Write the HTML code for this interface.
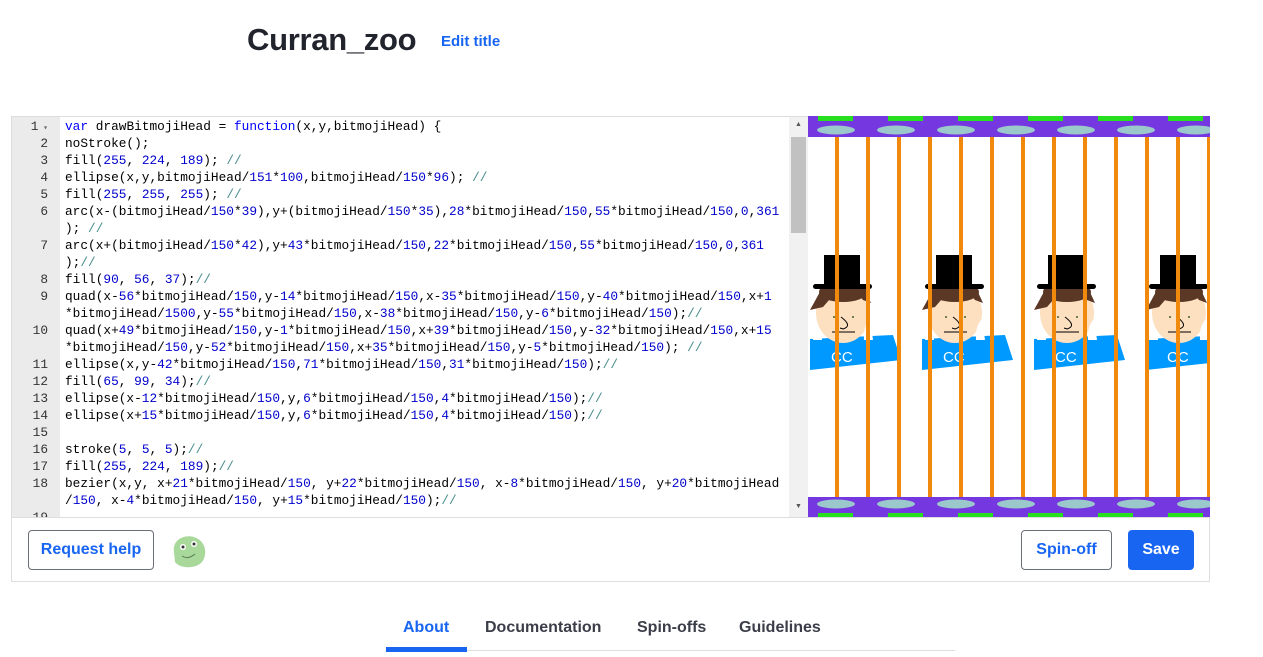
<!DOCTYPE html>
<html><head><meta charset="utf-8"><style>
body{margin:0;width:1263px;height:657px;background:#fff;font-family:"Liberation Sans",sans-serif;position:relative;overflow:hidden}
.abs{position:absolute}
h1{position:absolute;left:247px;top:22px;margin:0;font-size:31px;font-weight:bold;color:#21242c;letter-spacing:-0.3px}
.edit{left:441px;top:33px;color:#1865f2;font-size:15px;font-weight:bold}
.wrap{left:11px;top:116px;width:1199px;height:466px;border:1px solid #ddd;box-sizing:border-box}
.gut{left:12px;top:117px;width:48px;height:400px;background:#ebebeb}
.code{left:12px;top:117px;width:777px;height:400px;overflow:hidden;font-family:"Liberation Mono",monospace;font-size:12.8px;line-height:17px}
.ln{position:absolute;left:0;width:36px;text-align:right;color:#333}
.tx{position:absolute;left:53px;color:#000;white-space:pre}
.n{color:#0000cd}.k{color:#00f}.c{color:#4a8d8d}
.sb{left:789px;top:117px;width:19px;height:400px;background:#f1f1f1}
.btn{border:1px solid #6b6f78;border-radius:4px;box-sizing:border-box;font-size:16px;font-weight:bold;color:#1865f2;text-align:center}
</style></head><body>
<h1>Curran_zoo</h1>
<div class="abs edit">Edit title</div>
<div class="abs wrap"></div>
<div class="abs gut"></div>
<div class="abs code">
<div class="ln" style="top:1px">1<span style="font-size:8px;color:#666"> ▾</span></div>
<div class="ln" style="top:18px">2</div><div class="ln" style="top:35px">3</div><div class="ln" style="top:52px">4</div><div class="ln" style="top:69px">5</div><div class="ln" style="top:86px">6</div><div class="ln" style="top:120px">7</div><div class="ln" style="top:154px">8</div><div class="ln" style="top:171px">9</div><div class="ln" style="top:205px">10</div><div class="ln" style="top:239px">11</div><div class="ln" style="top:256px">12</div><div class="ln" style="top:273px">13</div><div class="ln" style="top:290px">14</div><div class="ln" style="top:307px">15</div><div class="ln" style="top:324px">16</div><div class="ln" style="top:341px">17</div><div class="ln" style="top:358px">18</div><div class="ln" style="top:392px">19</div>
<div class="tx" style="top:1px"><span class="k">var</span> drawBitmojiHead = <span class="k">function</span>(x,y,bitmojiHead) {
noStroke();
fill(<span class="n">255</span>, <span class="n">224</span>, <span class="n">189</span>); <span class="c">//</span>
ellipse(x,y,bitmojiHead/<span class="n">151</span>*<span class="n">100</span>,bitmojiHead/<span class="n">150</span>*<span class="n">96</span>); <span class="c">//</span>
fill(<span class="n">255</span>, <span class="n">255</span>, <span class="n">255</span>); <span class="c">//</span>
arc(x-(bitmojiHead/<span class="n">150</span>*<span class="n">39</span>),y+(bitmojiHead/<span class="n">150</span>*<span class="n">35</span>),<span class="n">28</span>*bitmojiHead/<span class="n">150</span>,<span class="n">55</span>*bitmojiHead/<span class="n">150</span>,<span class="n">0</span>,<span class="n">361</span>
); <span class="c">//</span>
arc(x+(bitmojiHead/<span class="n">150</span>*<span class="n">42</span>),y+<span class="n">43</span>*bitmojiHead/<span class="n">150</span>,<span class="n">22</span>*bitmojiHead/<span class="n">150</span>,<span class="n">55</span>*bitmojiHead/<span class="n">150</span>,<span class="n">0</span>,<span class="n">361</span>
);<span class="c">//</span>
fill(<span class="n">90</span>, <span class="n">56</span>, <span class="n">37</span>);<span class="c">//</span>
quad(x-<span class="n">56</span>*bitmojiHead/<span class="n">150</span>,y-<span class="n">14</span>*bitmojiHead/<span class="n">150</span>,x-<span class="n">35</span>*bitmojiHead/<span class="n">150</span>,y-<span class="n">40</span>*bitmojiHead/<span class="n">150</span>,x+<span class="n">1</span>
*bitmojiHead/<span class="n">1500</span>,y-<span class="n">55</span>*bitmojiHead/<span class="n">150</span>,x-<span class="n">38</span>*bitmojiHead/<span class="n">150</span>,y-<span class="n">6</span>*bitmojiHead/<span class="n">150</span>);<span class="c">//</span>
quad(x+<span class="n">49</span>*bitmojiHead/<span class="n">150</span>,y-<span class="n">1</span>*bitmojiHead/<span class="n">150</span>,x+<span class="n">39</span>*bitmojiHead/<span class="n">150</span>,y-<span class="n">32</span>*bitmojiHead/<span class="n">150</span>,x+<span class="n">15</span>
*bitmojiHead/<span class="n">150</span>,y-<span class="n">52</span>*bitmojiHead/<span class="n">150</span>,x+<span class="n">35</span>*bitmojiHead/<span class="n">150</span>,y-<span class="n">5</span>*bitmojiHead/<span class="n">150</span>); <span class="c">//</span>
ellipse(x,y-<span class="n">42</span>*bitmojiHead/<span class="n">150</span>,<span class="n">71</span>*bitmojiHead/<span class="n">150</span>,<span class="n">31</span>*bitmojiHead/<span class="n">150</span>);<span class="c">//</span>
fill(<span class="n">65</span>, <span class="n">99</span>, <span class="n">34</span>);<span class="c">//</span>
ellipse(x-<span class="n">12</span>*bitmojiHead/<span class="n">150</span>,y,<span class="n">6</span>*bitmojiHead/<span class="n">150</span>,<span class="n">4</span>*bitmojiHead/<span class="n">150</span>);<span class="c">//</span>
ellipse(x+<span class="n">15</span>*bitmojiHead/<span class="n">150</span>,y,<span class="n">6</span>*bitmojiHead/<span class="n">150</span>,<span class="n">4</span>*bitmojiHead/<span class="n">150</span>);<span class="c">//</span>

stroke(<span class="n">5</span>, <span class="n">5</span>, <span class="n">5</span>);<span class="c">//</span>
fill(<span class="n">255</span>, <span class="n">224</span>, <span class="n">189</span>);<span class="c">//</span>
bezier(x,y, x+<span class="n">21</span>*bitmojiHead/<span class="n">150</span>, y+<span class="n">22</span>*bitmojiHead/<span class="n">150</span>, x-<span class="n">8</span>*bitmojiHead/<span class="n">150</span>, y+<span class="n">20</span>*bitmojiHead
/<span class="n">150</span>, x-<span class="n">4</span>*bitmojiHead/<span class="n">150</span>, y+<span class="n">15</span>*bitmojiHead/<span class="n">150</span>);<span class="c">//</span></div>
</div>
<div class="abs sb"><div class="abs" style="left:2px;top:20px;width:15px;height:96px;background:#c1c1c1"></div>
<div class="abs" style="left:6px;top:4px;font-size:7px;color:#555">▲</div><div class="abs" style="left:6px;top:386px;font-size:7px;color:#555">▼</div></div>
<svg class="abs" style="left:808px;top:116px" width="402" height="401" viewBox="0 0 402 401">
<rect width="402" height="401" fill="#fff"/>
<defs><g id="hd">
<path d="M-33 223 L50 219 L58 244 L-33 254Z" fill="#0099ff"/>
<ellipse cx="0" cy="197" rx="27" ry="30" fill="#fde0c0"/>
<path d="M-29 205 Q-22 210 -21 224 L-30 224Z M27 203 Q20 210 21 224 L30 224Z" fill="#fff"/>
<ellipse cx="0" cy="176" rx="24" ry="10" fill="#5a3825"/>
<path d="M-33 194 L-22 174 L0 168 L-20 191Z M28 187 L22 174 L8 170 L20 184Z" fill="#5a3825"/>
<rect x="-19" y="139" width="36" height="33" fill="#000"/>
<rect x="-30" y="168" width="59" height="5" rx="2.5" fill="#000"/>
<path d="M-2 201 Q10 210 0 213 L-3 212" stroke="#000" fill="none"/>
<line x1="-11" y1="216" x2="12" y2="216" stroke="#000"/>
<circle cx="-9" cy="201" r="1" fill="#416322"/><circle cx="10" cy="201" r="1" fill="#416322"/>
<text x="-12" y="246" fill="#fff" font-size="15" font-family="Liberation Sans">CC</text>
</g></defs>
<use href="#hd" x="35"/><use href="#hd" x="147"/><use href="#hd" x="259"/><use href="#hd" x="371"/>
<rect x="0" y="0" width="402" height="21" fill="#7538e0"/>
<rect x="0" y="381" width="402" height="20" fill="#7538e0"/>
<g fill="#26e020">
<rect x="10" y="0" width="35" height="5"/><rect x="80" y="0" width="35" height="5"/><rect x="150" y="0" width="35" height="5"/><rect x="220" y="0" width="35" height="5"/><rect x="290" y="0" width="35" height="5"/><rect x="360" y="0" width="35" height="5"/>
<rect x="10" y="397" width="35" height="4"/><rect x="80" y="397" width="35" height="4"/><rect x="150" y="397" width="35" height="4"/><rect x="220" y="397" width="35" height="4"/><rect x="290" y="397" width="35" height="4"/><rect x="360" y="397" width="35" height="4"/>
</g>
<g fill="#9bc8cb">
<ellipse cx="28" cy="14" rx="19" ry="4.5"/><ellipse cx="88" cy="14" rx="19" ry="4.5"/><ellipse cx="148" cy="14" rx="19" ry="4.5"/><ellipse cx="208" cy="14" rx="19" ry="4.5"/><ellipse cx="268" cy="14" rx="19" ry="4.5"/><ellipse cx="328" cy="14" rx="19" ry="4.5"/><ellipse cx="388" cy="14" rx="19" ry="4.5"/>
<ellipse cx="28" cy="388" rx="19" ry="4.5"/><ellipse cx="88" cy="388" rx="19" ry="4.5"/><ellipse cx="148" cy="388" rx="19" ry="4.5"/><ellipse cx="208" cy="388" rx="19" ry="4.5"/><ellipse cx="268" cy="388" rx="19" ry="4.5"/><ellipse cx="328" cy="388" rx="19" ry="4.5"/><ellipse cx="388" cy="388" rx="19" ry="4.5"/>
</g>
<g fill="#f18a0c">
<rect x="27" y="21" width="4" height="360"/><rect x="58" y="21" width="4" height="360"/><rect x="89" y="21" width="4" height="360"/><rect x="120" y="21" width="4" height="360"/><rect x="151" y="21" width="4" height="360"/><rect x="182" y="21" width="4" height="360"/><rect x="213" y="21" width="4" height="360"/><rect x="244" y="21" width="4" height="360"/><rect x="275" y="21" width="4" height="360"/><rect x="306" y="21" width="4" height="360"/><rect x="337" y="21" width="4" height="360"/><rect x="368" y="21" width="4" height="360"/><rect x="399" y="21" width="4" height="360"/>
</g>
</svg>
<div class="abs" style="left:11px;top:517px;width:1199px;height:1px;background:#ddd"></div>
<div class="abs btn" style="left:28px;top:530px;width:126px;height:40px;line-height:38px">Request help</div>
<svg class="abs" style="left:168px;top:532px" width="42" height="38"><path d="M6 20 C4 8 16 2 26 5 C38 9 40 22 34 30 C28 37 12 37 7 30Z" fill="#a8d99a"/><circle cx="15" cy="15" r="3" fill="#fff"/><circle cx="15" cy="15" r="1.5" fill="#333"/><circle cx="26" cy="12" r="3" fill="#fff"/><circle cx="26" cy="12" r="1.5" fill="#333"/><path d="M14 24 Q20 28 27 22" stroke="#5a7a50" fill="none"/></svg>
<div class="abs btn" style="left:1021px;top:530px;width:91px;height:40px;line-height:38px">Spin-off</div>
<div class="abs btn" style="left:1128px;top:530px;width:66px;height:40px;line-height:40px;background:#1865f2;border:none;color:#fff">Save</div>
<div class="abs" style="left:385px;top:650px;width:570px;height:1px;background:#ddd"></div>
<div class="abs" style="left:386px;top:647px;width:81px;height:5px;background:#1865f2"></div>
<div class="abs" style="left:403px;top:619px;font-size:16px;font-weight:bold;color:#1865f2">About</div>
<div class="abs" style="left:485px;top:619px;font-size:16px;font-weight:bold;color:#3b3e48">Documentation</div>
<div class="abs" style="left:637px;top:619px;font-size:16px;font-weight:bold;color:#3b3e48">Spin-offs</div>
<div class="abs" style="left:739px;top:619px;font-size:16px;font-weight:bold;color:#3b3e48">Guidelines</div>
</body></html>
